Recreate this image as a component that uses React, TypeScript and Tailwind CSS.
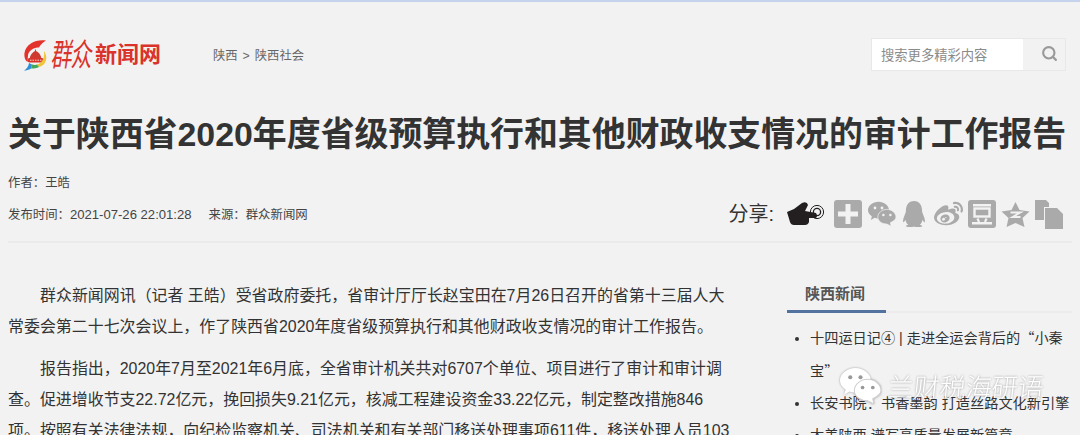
import React from 'react';
import { FaQq, FaWeibo } from 'react-icons/fa';
import { Search } from 'lucide-react';

const cjk = { fontFamily: '"Liberation Sans", "Noto Sans CJK SC", sans-serif' };

const LogoMark = () => (
  <svg width="23" height="31" viewBox="0 0 23 31" className="shrink-0">
    <path d="M22 0.500 C13 -1 2 3 0.500 13 C0 17 1 20 3.500 22 L4 15 C5 10 10 7.500 15 7.500 C16 5 19 2.500 22 0.500Z" fill="#e3322b" />
    <path d="M5.500 19 C6 15 8.500 12.500 11 11 L11 9.500 L12 9.500 L12 11 C15 12.500 17 15 17.500 19Z" fill="#cf3a30" />
    <rect x="3.500" y="18" width="16.500" height="4.500" rx="2.200" fill="#d8352c" />
    <path d="M6 20.200 H18" stroke="#f6d9c8" strokeWidth="1" strokeDasharray="1.500 1" />
    <path d="M20 11 C23 15 23 20 20.500 23.500 C19 25.500 17 26.500 15 27 L13 24.500 C17 24 21 19 20 11Z" fill="#efc53a" />
    <path d="M15 27 C13 28 10 28.500 7 28.500 L8 24.500 C10 25 12 25 13 24.500Z" fill="#43a85a" />
    <path d="M8 24.500 L7 28.500 C5 30 2 30.500 0 30.500 C2.500 29 4.500 26.500 5 23Z" fill="#2f8fd6" />
  </svg>
);

const HandIcon = () => (
  <svg width="37" height="24" viewBox="0 0 37 24">
    <path d="M0 10 L7 7 L15 1 Q20 -1 21 3 L18 9 L29 11 Q31 14 29 16 L22 16 L22 20 Q21 23 18 23 L7 23 Q4 23 3 20Z" fill="#231f20" />
    <circle cx="30" cy="10" r="3.600" fill="none" stroke="#231f20" strokeWidth="1.300" />
    <circle cx="30" cy="10" r="6.600" fill="none" stroke="#231f20" strokeWidth="1" />
  </svg>
);

const PlusIcon = () => (
  <svg width="28" height="28" viewBox="0 0 28 28">
    <rect width="28" height="28" rx="3" fill="#aaaaaa" />
    <rect x="11.500" y="4" width="5" height="20" fill="#f2f2f2" />
    <rect x="4" y="11.500" width="20" height="5" fill="#f2f2f2" />
  </svg>
);

const WechatBubbles = ({ size, fill, dot, edge }: { size: number; fill: string; dot: string; edge: string }) => (
  <svg width={size} height={size * 0.9} viewBox="0 0 40 36">
    <path d="M15 1 C7 1 0 6.500 0 13 C0 17 2.500 20 5.500 22 L4 27 L9.500 24 C11 24.500 12.500 25 15 25 C24 25 30 19 30 13 C30 6.500 23 1 15 1Z" fill={fill} />
    <circle cx="10" cy="10" r="2" fill={dot} />
    <circle cx="20" cy="10" r="2" fill={dot} />
    <path d="M27 12 C20 12 14 17 14 23 C14 29 20 33 27 33 L33 36 L32 31 C36 29 40 27 40 23 C40 17 34 12 27 12Z" fill={fill} stroke={edge} strokeWidth="1" />
    <circle cx="22" cy="20" r="1.800" fill={dot} />
    <circle cx="32" cy="20" r="1.800" fill={dot} />
  </svg>
);

const DoubanIcon = () => (
  <svg width="28" height="28" viewBox="0 0 28 28">
    <rect width="28" height="28" rx="3" fill="#aaaaaa" />
    <rect x="5" y="4" width="18" height="2.500" fill="#f2f2f2" />
    <rect x="6.500" y="8.500" width="15" height="8" fill="none" stroke="#f2f2f2" strokeWidth="2.400" />
    <path d="M9.500 18.500 L11 22 M18.500 18.500 L17 22" stroke="#f2f2f2" strokeWidth="2.200" />
    <rect x="4" y="22" width="20" height="2.500" fill="#f2f2f2" />
  </svg>
);

const QzoneIcon = () => (
  <svg width="29" height="28" viewBox="0 0 28 28">
    <path d="M14 2 L18 10 L28 11.500 L21 18 L23 27 L14 23 L5 27 L7 18 L0 11.500 L10 10Z" fill="#aaaaaa" />
    <path d="M9 12.500 H19 L11 17 H19" fill="none" stroke="#f2f2f2" strokeWidth="1.800" />
  </svg>
);

const CopyIcon = () => (
  <svg width="28" height="29" viewBox="0 0 28 29">
    <path d="M0 0 H11 L14 3 V7 H9 V20 H0Z" fill="#aaaaaa" />
    <path d="M10 8 H22 L28 14 V29 H10Z" fill="#aaaaaa" />
  </svg>
);

export default function App() {
  return (
    <div className="h-[435px] w-[1080px] overflow-hidden relative bg-[#f2f2f2] border-t-2 border-[#c6d3ec] text-[#333]" style={cjk}>
      {/* Header */}
      <div className="flex items-center h-[106px] pl-[24px] pr-[14px]">
        <div className="flex items-center w-[189px]">
          <LogoMark />
          <span className="ml-[5px] inline-block text-[21px] text-[#d9332b] tracking-[-1px] whitespace-nowrap -skew-x-12 scale-y-150">群众</span>
          <span className="ml-[3px] text-[22px] font-bold text-[#d9332b] leading-none whitespace-nowrap">新闻网</span>
        </div>
        <div className="flex gap-[5px] text-[12.300px] text-[#666] mt-[3px]">
          <span>陕西</span>
          <span>&gt;</span>
          <span>陕西社会</span>
        </div>
        <div className="ml-auto flex h-[33px] w-[195px] border border-[#e8e8e8] -mt-[2px]">
          <div className="w-[151px] bg-white pl-[9px] pt-[3px] flex items-center text-[13.300px] text-[#8a8a8a]">搜索更多精彩内容</div>
          <div className="flex-1 flex items-center justify-center pl-[10px] pb-[2px]">
            <Search size={17} strokeWidth={3} className="text-[#999]" />
          </div>
        </div>
      </div>

      {/* Title */}
      <h1 className="mt-[5px] pl-[8px] text-[33.900px] leading-[42px] font-bold text-[#333] whitespace-nowrap">
        关于陕西省2020年度省级预算执行和其他财政收支情况的审计工作报告
      </h1>

      {/* Meta */}
      <div className="mx-[8px] mt-[19px] border-b-2 border-[#ebebeb] h-[69px]">
        <div className="text-[12.400px] leading-[18px] text-[#444]">作者：王皓</div>
        <div className="flex mt-[14px] items-start">
          <div className="text-[12.400px] leading-[18px] text-[#444] whitespace-nowrap">
            发布时间：<span className="text-[13.100px]">2021-07-26 22:01:28</span>
            <span className="ml-[17px]">来源：群众新闻网</span>
          </div>
          <div className="ml-auto flex items-center gap-[5px] pr-[9px] -mt-[7px]">
            <span className="text-[20px] text-[#333] mr-[8px] whitespace-nowrap">分享:</span>
            <HandIcon />
            <span className="ml-[5px]"><PlusIcon /></span>
            <span className="ml-[1px]"><WechatBubbles size={28} fill="#aaa" dot="#f2f2f2" edge="#f2f2f2" /></span>
            <FaQq size={26} className="text-[#aaaaaa]" />
            <FaWeibo size={29} className="text-[#aaaaaa] ml-[2px]" />
            <DoubanIcon />
            <QzoneIcon />
            <CopyIcon />
          </div>
        </div>
      </div>

      {/* Body */}
      <div className="flex pl-[8px] pr-[8px] pt-[37px]">
        <div className="w-[727px] shrink-0 text-[15.950px] leading-[31px] text-[#333]">
          <p className="indent-[32px] mb-[11px]">群众新闻网讯（记者 王皓）受省政府委托，省审计厅厅长赵宝田在7月26日召开的省第十三届人大常委会第二十七次会议上，作了陕西省2020年度省级预算执行和其他财政收支情况的审计工作报告。</p>
          <p className="indent-[32px]">报告指出，2020年7月至2021年6月底，全省审计机关共对6707个单位、项目进行了审计和审计调查。促进增收节支22.72亿元，挽回损失9.21亿元，核减工程建设资金33.22亿元，制定整改措施846项。按照有关法律法规，向纪检监察机关、司法机关和有关部门移送处理事项611件，移送处理人员103人。</p>
        </div>
        <div className="ml-[52px] w-[285px] shrink-0 mt-[2px]">
          <div className="border-b-2 border-[#ebebeb] h-[31px]">
            <div className="w-[99px] h-[31px] border-b-[3px] border-[#54729f] pl-[18px] text-[15px] leading-[24px] font-bold text-[#555]">陕西新闻</div>
          </div>
          <ul className="mt-[8px] pl-[23px] list-disc text-[14.200px] leading-[32px] text-[#333]">
            <li>十四运日记④ | 走进全运会背后的<span style={{ fontFamily: '"Noto Sans CJK SC", sans-serif' }}>“</span>小秦宝<span style={{ fontFamily: '"Noto Sans CJK SC", sans-serif' }}>”</span></li>
            <li>长安书院：书香墨韵 打造丝路文化新引擎</li>
            <li>大美陕西 谱写高质量发展新篇章</li>
          </ul>
        </div>
      </div>

      {/* Watermark */}
      <div className="absolute left-[840px] top-[364px] flex items-center drop-shadow-[0_0_1px_rgba(0,0,0,0.35)]">
        <WechatBubbles size={41} fill="#fff" dot="#999" edge="#d0d0d0" />
        <span className="ml-[7px] -skew-x-6 text-[26px] text-white whitespace-nowrap" style={{ fontFamily: '"Noto Sans CJK SC", sans-serif', fontWeight: 300 }}>兰财税海研语</span>
      </div>
    </div>
  );
}
